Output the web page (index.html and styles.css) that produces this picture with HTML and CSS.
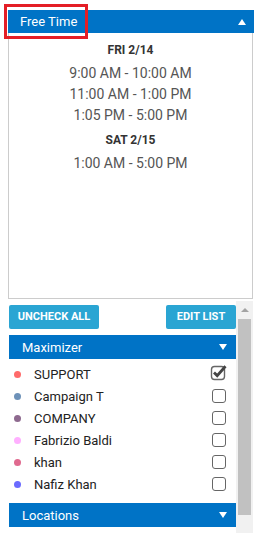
FILE: index.html
```html
<!DOCTYPE html>
<html lang="en">
<head>
	<meta charset="UTF-8">
	<title>Free Time</title>
	<link rel="stylesheet" href="styles.css">
</head>
<body>
	<div id="wrap">
		<div class="bar head">
			<span>Free Time</span>
			<i class="arrow up"></i>
			<div class="mark"></div>
		</div>
		<div class="times">
			<div class="day">FRI 2/14</div>
			<ul class="slots">
				<li>9:00 AM - 10:00 AM</li>
				<li>11:00 AM - 1:00 PM</li>
				<li>1:05 PM - 5:00 PM</li>
			</ul>
			<div class="day">SAT 2/15</div>
			<ul class="slots last">
				<li>1:00 AM - 5:00 PM</li>
			</ul>
		</div>

		<div class="lower">
			<div class="content">
				<div class="btns">
					<a href="javascript:;" class="btn wide">UNCHECK ALL</a>
					<a href="javascript:;" class="btn">EDIT LIST</a>
				</div>
				<div class="bar group">
					<span>Maximizer</span>
					<i class="arrow down"></i>
				</div>
				<ul class="people">
					<li><b class="dot c1"></b><span>SUPPORT</span>
						<svg class="box" width="18" height="18" viewBox="0 0 18 18">
							<rect x="1.5" y="3.5" width="13" height="13" rx="3" fill="#fff" stroke="#666" stroke-width="1.4"/>
							<path d="M4 9.5 L7.2 12.6 L15.5 3.2" fill="none" stroke="#444" stroke-width="2.8"/>
						</svg>
					</li>
					<li><b class="dot c2"></b><span>Campaign T</span><i class="check"></i></li>
					<li><b class="dot c3"></b><span>COMPANY</span><i class="check"></i></li>
					<li><b class="dot c4"></b><span>Fabrizio Baldi</span><i class="check"></i></li>
					<li><b class="dot c5"></b><span>khan</span><i class="check"></i></li>
					<li><b class="dot c6"></b><span>Nafiz Khan</span><i class="check"></i></li>
				</ul>
				<div class="bar group">
					<span>Locations</span>
					<i class="arrow down"></i>
				</div>
			</div>
			<div class="scroll">
				<i class="arrow tiny"></i>
				<div class="thumb"></div>
			</div>
		</div>
	</div>
</body>
</html>
```

FILE: styles.css
```css
body {
	margin: 0;
	overflow: hidden;
	background: #fff;
	font-family: Roboto, "Liberation Sans", Arial, sans-serif;
}
ul {
	padding: 0;
	margin: 0;
	list-style: none;
}
a {
	text-decoration: none;
}
#wrap {
	width: 246px;
	margin: 10px 0 0 8px;
}
.bar {
	position: relative;
	display: flex;
	align-items: center;
	justify-content: space-between;
	height: 24px;
	background: #0073c6;
	color: #fff;
	font-size: 13px;
	font-weight: 400;
}
.head {
	height: 23px;
	padding: 0 8px 0 12px;
}
.mark {
	position: absolute;
	left: -4px;
	top: -6px;
	width: 84px;
	height: 35px;
	border: 3px solid #e41e26;
	box-sizing: border-box;
}
.arrow {
	width: 0;
	height: 0;
	border-left: 4px solid transparent;
	border-right: 4px solid transparent;
}
.arrow.up {
	border-bottom: 6px solid #fff;
}
.arrow.down {
	border-top: 6px solid #fff;
}
.times {
	width: 245px;
	height: 266px;
	border: 1px solid #ccc;
	border-top: none;
	box-sizing: border-box;
	padding-top: 7px;
	text-align: center;
}
.day {
	height: 20px;
	line-height: 20px;
	font-size: 12px;
	font-weight: bold;
	color: #333;
}
.slots {
	margin: 3px 0 4px;
	font-size: 14px;
	line-height: 21px;
	color: #555;
}
.lower {
	display: flex;
	width: 244px;
	height: 232px;
	margin: 2px 0 0 1px;
}
.content {
	width: 227px;
}
.btns {
	display: flex;
	justify-content: space-between;
	margin: 4px 0 6px;
}
.btn {
	display: block;
	width: 70px;
	height: 24px;
	line-height: 24px;
	border-radius: 2px;
	background: #2aa5d3;
	color: #fff;
	font-size: 11px;
	font-weight: bold;
	text-align: center;
}
.btn.wide {
	width: 90px;
}
.group {
	padding: 0 9px 0 13px;
}
.people {
	padding: 4px 0 8px;
}
.people li {
	display: flex;
	align-items: center;
	height: 22px;
	padding-left: 5px;
	font-size: 13px;
	color: #222;
}
.dot {
	width: 7px;
	height: 7px;
	margin-right: 13px;
	border-radius: 50%;
}
.c1 { background: #ff6b6b; }
.c2 { background: #6e92b9; }
.c3 { background: #8e6a8f; }
.c4 { background: #ffb0ff; }
.c5 { background: #e06a8f; }
.c6 { background: #6b6bff; }
.people span {
	flex: 1;
}
.check {
	width: 14px;
	height: 14px;
	margin-right: 10px;
	border: 1.4px solid #666;
	border-radius: 3px;
	box-sizing: border-box;
}
.box {
	margin: -4px 8px 0 0;
}
.scroll {
	display: flex;
	flex-direction: column;
	align-items: center;
	width: 17px;
	background: #f1f1f1;
}
.arrow.tiny {
	margin: 7px 0 7px;
	border-bottom: 4px solid #a3a3a3;
}
.thumb {
	width: 13px;
	height: 196px;
	background: #c1c1c1;
}
```
